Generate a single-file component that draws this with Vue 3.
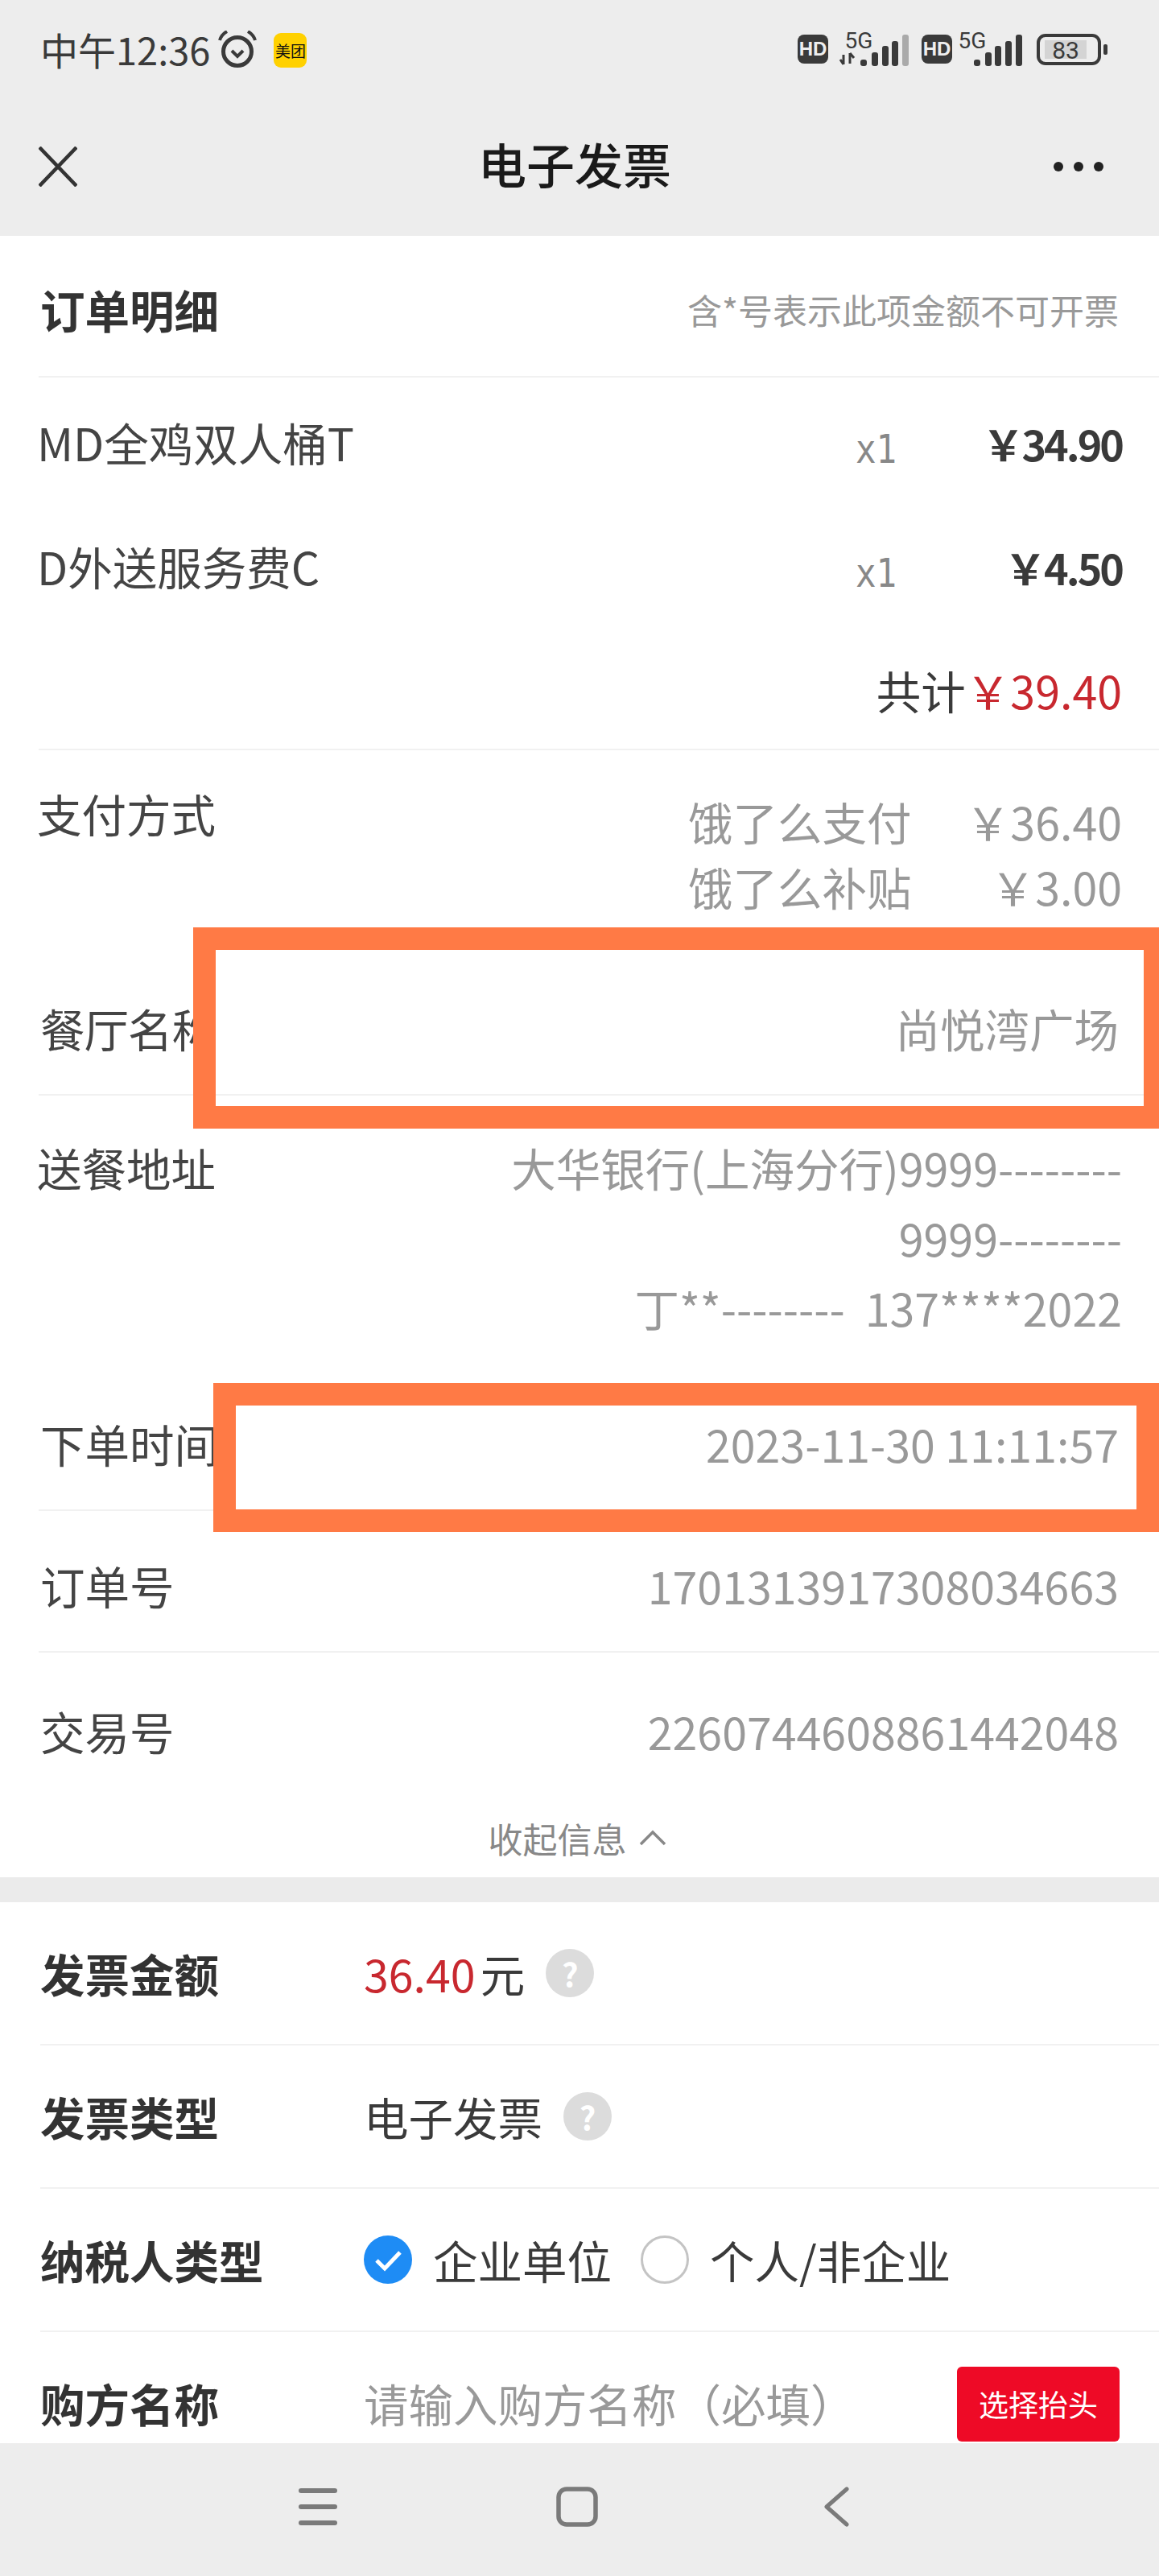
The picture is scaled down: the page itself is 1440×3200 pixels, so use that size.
<script setup>
const items = [
  { name: 'MD全鸡双人桶T', qty: 'x1', price: '￥34.90' },
  { name: 'D外送服务费C', qty: 'x1', price: '￥4.50' }
]
const payments = [
  { name: '饿了么支付', amount: '￥36.40' },
  { name: '饿了么补贴', amount: '￥3.00' }
]
const address = ['大华银行(上海分行)9999--------', '9999--------', '丁**--------  137****2022']
const bars1 = [[1069, 74], [1083, 65], [1096, 57], [1108, 51]]
const bars2 = [[1210, 74], [1224, 65], [1236, 57], [1249, 51], [1262, 43]]
</script>

<template>
  <div class="phone">
    <header class="top">
      <div class="status">
        <div class="statusLeft">
          <span class="clock">中午12:36</span>
          <svg class="alarm" width="50" height="46" viewBox="0 0 50 46" fill="none" stroke="#3a3a3a">
            <circle cx="25" cy="26" r="17.5" stroke-width="5" />
            <path d="M18 25l7 7 7-7" stroke-width="4" />
            <path d="M3 12Q5 5 12 1M47 12Q45 5 38 1" stroke-width="4" />
          </svg>
          <span class="meituan">美团</span>
        </div>
        <svg class="signal" width="390" height="74" viewBox="990 10 390 74">
          <rect x="991" y="43" width="38" height="36" rx="8" fill="#3a3a3a" />
          <text x="1010" y="69" class="hd">HD</text>
          <text x="1067" y="60" class="fiveG">5G</text>
          <path d="M1048 68v12M1044 74l4 6M1056 66v13M1056 66l5 6" stroke="#3a3a3a" stroke-width="3" fill="none" />
          <rect v-for="b in bars1" :key="b[0]" :x="b[0]" :y="b[1]" width="8" :height="82 - b[1]" rx="3" fill="#3a3a3a" />
          <rect x="1121" y="43" width="8" height="39" rx="3" fill="#aaa" />
          <rect x="1145" y="43" width="38" height="36" rx="8" fill="#3a3a3a" />
          <text x="1164" y="69" class="hd">HD</text>
          <text x="1208" y="60" class="fiveG">5G</text>
          <rect v-for="b in bars2" :key="b[0]" :x="b[0]" :y="b[1]" width="8" :height="82 - b[1]" rx="3" fill="#3a3a3a" />
          <rect x="1290" y="44" width="76" height="35" rx="9" fill="none" stroke="#3a3a3a" stroke-width="4" />
          <rect x="1298" y="50" width="52" height="23" fill="#d4d4d4" />
          <text x="1324" y="73" class="level">83</text>
          <rect x="1371" y="55" width="5" height="13" rx="2" fill="#3a3a3a" />
        </svg>
      </div>
      <div class="titleBar">
        <svg width="48" height="50" viewBox="0 0 48 50" stroke="#333" stroke-width="4.5">
          <path d="M1 1l46 48M47 1L1 49" />
        </svg>
        <span class="title">电子发票</span>
        <div class="dots"><i></i><i></i><i></i></div>
      </div>
    </header>

    <main class="content">
      <section class="order">
        <div class="orderHead">
          <span class="strong">订单明细</span>
          <span class="hint">含*号表示此项金额不可开票</span>
        </div>
        <div class="itemsBlock line">
          <div v-for="item in items" :key="item.name" class="item">
            <span class="label">{{ item.name }}</span>
            <span class="qty">{{ item.qty }}</span>
            <span class="price">{{ item.price }}</span>
          </div>
          <div class="total">共计<span class="red">￥39.40</span></div>
        </div>
        <div class="payBlock">
          <span class="label">支付方式</span>
          <div class="payList">
            <div v-for="p in payments" :key="p.name" class="payRow">
              <span>{{ p.name }}</span>
              <span>{{ p.amount }}</span>
            </div>
          </div>
        </div>
        <div class="infoRow line restaurant">
          <span class="label">餐厅名称</span>
          <span class="muted">尚悦湾广场</span>
        </div>
        <div class="addressRow">
          <span class="label">送餐地址</span>
          <div class="addressLines">
            <div v-for="a in address" :key="a">{{ a }}</div>
          </div>
        </div>
        <div class="infoRow line timeRow">
          <span class="label">下单时间</span>
          <span class="muted">2023-11-30 11:11:57</span>
        </div>
        <div class="infoRow line orderNo">
          <span class="label">订单号</span>
          <span class="muted">1701313917308034663</span>
        </div>
        <div class="infoRow tradeRow">
          <span class="label">交易号</span>
          <span class="muted">2260744608861442048</span>
        </div>
        <div class="collapse">
          <span>收起信息</span>
          <svg width="34" height="20" viewBox="0 0 34 20" fill="none" stroke="#888" stroke-width="3.5">
            <path d="M2 18L17 3l15 15" />
          </svg>
        </div>
      </section>

      <section class="invoice">
        <div class="formRow line">
          <span class="strong formLabel">发票金额</span>
          <span class="red">36.40</span><span class="unit">元</span>
          <span class="help">?</span>
        </div>
        <div class="formRow line">
          <span class="strong formLabel">发票类型</span>
          <span class="value">电子发票</span>
          <span class="help">?</span>
        </div>
        <div class="formRow line">
          <span class="strong formLabel">纳税人类型</span>
          <svg class="radio" width="60" height="60" viewBox="0 0 60 60">
            <circle cx="30" cy="30" r="30" fill="#1e8cf5" />
            <path d="M16 31l10 10 19-20" fill="none" stroke="#fff" stroke-width="5" />
          </svg>
          <span class="value optionOne">企业单位</span>
          <span class="radioEmpty"></span>
          <span class="value optionTwo">个人/非企业</span>
        </div>
        <div class="formRow buyer">
          <span class="strong formLabel">购方名称</span>
          <span class="placeholder">请输入购方名称（必填）</span>
          <button class="pick">选择抬头</button>
        </div>
      </section>

      <div class="mark markOne"></div>
      <div class="mark markTwo"></div>
    </main>

    <nav class="softKeys">
      <div class="key">
        <svg width="48" height="46" viewBox="0 0 48 46" fill="#7a7a7a">
          <rect y="0" width="48" height="6" rx="3" />
          <rect y="20" width="48" height="6" rx="3" />
          <rect y="40" width="48" height="6" rx="3" />
        </svg>
      </div>
      <div class="key">
        <svg width="52" height="50" viewBox="0 0 52 50" fill="none" stroke="#7a7a7a" stroke-width="5.5">
          <rect x="3" y="3" width="46" height="44" rx="10" />
        </svg>
      </div>
      <div class="key">
        <svg width="32" height="50" viewBox="0 0 32 50" fill="none" stroke="#7a7a7a" stroke-width="5" stroke-linecap="round" stroke-linejoin="round">
          <path d="M29 3L4 25l25 22" />
        </svg>
      </div>
    </nav>
  </div>
</template>

<style scoped>
.phone {
  width: 1440px;
  height: 3200px;
  display: flex;
  flex-direction: column;
  overflow: hidden;
  background: #fff;
  font-family: "Noto Sans CJK SC", "Noto Sans", sans-serif;
  font-size: 55.5px;
  color: #444;
}

.top {
  height: 293px;
  flex-shrink: 0;
  background: #ededed;
}

.status {
  height: 125px;
  display: flex;
  justify-content: space-between;
  align-items: flex-start;
  padding: 10px 60px 0 50px;
  box-sizing: border-box;
}

.statusLeft {
  display: flex;
  align-items: center;
  height: 46px;
  margin-top: 28px;
}

.clock {
  font-size: 47px;
  line-height: 46px;
  color: #3a3a3a;
}

.alarm {
  margin-left: 9px;
}

.meituan {
  width: 41px;
  height: 43px;
  margin-left: 20px;
  margin-top: 2px;
  border-radius: 9px;
  background: #ffd100;
  color: #111;
  font-size: 19px;
  line-height: 43px;
  text-align: center;
  white-space: nowrap;
}

.hd {
  font: 700 24px "Liberation Sans", sans-serif;
  fill: #eee;
  text-anchor: middle;
}

.fiveG {
  font: 400 28px "Roboto", sans-serif;
  fill: #3a3a3a;
  text-anchor: middle;
}

.level {
  font: 400 30px "Roboto", sans-serif;
  fill: #3a3a3a;
  text-anchor: middle;
}

.titleBar {
  height: 168px;
  display: flex;
  align-items: center;
  justify-content: space-between;
  padding: 0 69px 4px 48px;
  box-sizing: border-box;
  position: relative;
}

.title {
  position: absolute;
  left: 0;
  right: 12px;
  margin-top: -10px;
  text-align: center;
  font-size: 60px;
  font-weight: 500;
  color: #1a1a1a;
}

.dots {
  display: flex;
  gap: 13px;
}

.dots i {
  width: 12px;
  height: 12px;
  border-radius: 50%;
  background: #222;
}

.content {
  position: relative;
  flex: 1;
  min-height: 0;
  overflow: hidden;
}

.line {
  border-bottom: 2px solid #f1f1f1;
}

.orderHead {
  height: 176px;
  margin-left: 48px;
  padding: 8px 50px 0 2px;
  box-sizing: border-box;
  display: flex;
  align-items: center;
  justify-content: space-between;
  border-bottom: 2px solid #f1f1f1;
}

.strong {
  font-weight: 700;
  color: #333;
}

.hint {
  font-size: 43px;
  color: #999;
}

.itemsBlock {
  margin-left: 48px;
  padding-top: 3px;
  height: 463px;
  box-sizing: border-box;
  padding-right: 46px;
}

.item {
  height: 154px;
  display: flex;
  align-items: center;
}

.label {
  color: #444;
  white-space: nowrap;
}

.item .label,
.payBlock .label,
.addressRow .label {
  margin-left: -2px;
}

.qty {
  margin-left: auto;
  margin-top: 18px;
  font-family: "DejaVu Sans Mono", monospace;
  font-size: 50px;
  color: #888;
  transform: scaleX(0.85);
  transform-origin: right center;
}

.price {
  width: 280px;
  margin-top: 3px;
  text-align: right;
  font-size: 52px;
  font-weight: 700;
  letter-spacing: -3px;
  color: #3a3a3a;
}

.total {
  height: 150px;
  text-align: right;
  line-height: 154px;
  color: #3a3a3a;
}

.red {
  color: #c8282f;
}

.payBlock {
  margin-left: 48px;
  padding: 38px 46px 0 0;
  height: 263px;
  box-sizing: border-box;
  display: flex;
  justify-content: space-between;
  align-items: flex-start;
}

.payList {
  width: 539px;
  margin-top: 10px;
  color: #999;
}

.payRow {
  display: flex;
  justify-content: space-between;
  height: 81px;
  line-height: 81px;
}

.infoRow {
  margin-left: 48px;
  padding-right: 50px;
  height: 176px;
  box-sizing: border-box;
  display: flex;
  align-items: center;
  justify-content: space-between;
}

.infoRow .label {
  margin-left: 2px;
}

.restaurant {
  height: 166px;
}

.restaurant .label {
  letter-spacing: -1px;
}

.muted {
  color: #999;
}

.addressRow {
  margin-left: 48px;
  padding: 46px 46px 45px 0;
  display: flex;
  justify-content: space-between;
  line-height: 87px;
}

.addressLines {
  text-align: right;
  color: #999;
  white-space: pre;
}

.timeRow {
  height: 164px;
  padding-bottom: 2px;
}

.orderNo {
  padding-top: 10px;
}

.tradeRow {
  height: 195px;
  padding-bottom: 2px;
}

.collapse {
  height: 84px;
  display: flex;
  align-items: center;
  justify-content: center;
  gap: 15px;
  padding-bottom: 14px;
  box-sizing: border-box;
  font-size: 43px;
  color: #888;
}

.collapse svg {
  margin-right: 6px;
}

.invoice {
  border-top: 31px solid #ebebeb;
}

.formRow {
  margin-left: 50px;
  height: 178px;
  box-sizing: border-box;
  display: flex;
  align-items: center;
}

.formLabel {
  width: 402px;
  flex-shrink: 0;
}

.unit {
  color: #3a3a3a;
  margin-left: 6px;
}

.value {
  color: #3a3a3a;
}

.help {
  width: 60px;
  height: 60px;
  margin-left: 26px;
  border-radius: 50%;
  background: #dcdcdc;
  color: #fff;
  font-size: 40px;
  font-weight: 700;
  line-height: 60px;
  text-align: center;
}

.optionOne {
  margin-left: 26px;
}

.radioEmpty {
  width: 60px;
  height: 60px;
  margin-left: 36px;
  box-sizing: border-box;
  border: 3px solid #c4c4c4;
  border-radius: 50%;
}

.optionTwo {
  margin-left: 26px;
}

.buyer {
  height: 176px;
  padding-right: 49px;
}

.placeholder {
  color: #999;
  white-space: nowrap;
}

.pick {
  margin-left: auto;
  margin-top: 2px;
  width: 202px;
  height: 93px;
  padding: 0;
  border: none;
  border-radius: 6px;
  background: #ee0a26;
  color: #fff;
  font-family: inherit;
  font-size: 37px;
}

.mark {
  position: absolute;
  box-sizing: border-box;
  border: 28px solid #ff7a45;
  right: 0;
}

.markOne {
  left: 240px;
  top: 859px;
  height: 250px;
  border-right-width: 19px;
}

.markTwo {
  left: 265px;
  top: 1425px;
  height: 185px;
}

.softKeys {
  height: 165px;
  flex-shrink: 0;
  background: #ededed;
  display: flex;
  justify-content: center;
  padding: 0 6px 7px 0;
  box-sizing: border-box;
}

.key {
  width: 322px;
  display: flex;
  align-items: center;
  justify-content: center;
}
</style>
